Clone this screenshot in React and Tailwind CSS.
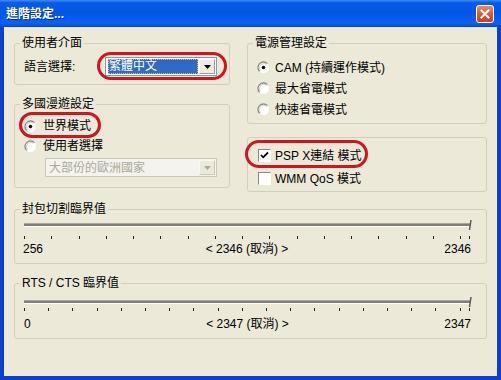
import React from "react";

function Radio({ checked }) {
  return (
    <svg width="13" height="13" viewBox="0 0 13 13" className="shrink-0 block">
      <circle cx="6.5" cy="6.5" r="5.5" fill="#ffffff" />
      <path d="M2.6 10.4 A5.5 5.5 0 0 1 10.4 2.6" stroke="#8a8a85" strokeWidth="1.3" fill="none" />
      <path d="M3.4 9.6 A4.4 4.4 0 0 1 9.6 3.4" stroke="#d4d0c8" strokeWidth="1" fill="none" />
      {checked && <circle cx="6.5" cy="6.5" r="1.8" fill="#111" />}
    </svg>
  );
}

function Check({ checked }) {
  return (
    <div className="w-[13px] h-[13px] shrink-0 bg-white border-t border-l border-t-[#8a8a85] border-l-[#8a8a85] border-b border-r border-b-white border-r-white relative">
      {checked && (
        <svg width="11" height="11" viewBox="0 0 11 11" className="absolute left-[0px] top-[0px]">
          <path d="M2 5 L4.2 7.3 L9 2.5" stroke="#000" strokeWidth="1.8" fill="none" />
        </svg>
      )}
    </div>
  );
}

function Arrow({ color }) {
  return (
    <svg width="7" height="4" viewBox="0 0 7 4" className="block">
      <path d="M0 0 H7 L3.5 4 Z" fill={color} />
    </svg>
  );
}

function Combo({ text, disabled, width }) {
  return (
    <div
      className={
        "h-[19px] flex items-center border p-[1px] " +
        (disabled ? "border-[#c9c7ba] bg-[#f4f3ee]" : "border-[#7f9db9] bg-white")
      }
      style={{ width }}
    >
      <div className="flex-1 h-full flex items-center pl-[1px]">
        {disabled ? (
          <span className="text-[#aca899] leading-[14px] pl-[1px]">{text}</span>
        ) : (
          <span className="h-full w-full bg-[#316ac5] text-white leading-[15px] pl-[1px] outline-1 outline-dotted outline-[#cfc28a] -outline-offset-1">
            {text}
          </span>
        )}
      </div>
      <div
        className={
          "w-[16px] h-full ml-[1px] flex items-center justify-center border-t border-l border-b border-r " +
          (disabled
            ? "bg-[#ece9d8] border-t-[#f7f7f3] border-l-[#f7f7f3] border-b-[#c9c7ba] border-r-[#c9c7ba]"
            : "bg-[#ecebe6] border-t-white border-l-white border-b-[#9d9c97] border-r-[#9d9c97]")
        }
      >
        <Arrow color={disabled ? "#aca899" : "#000"} />
      </div>
    </div>
  );
}

function Slider({ ticks, height, trackY, tickY }) {
  return (
    <svg width="471" height={height} className="block">
      <rect x="9" y={trackY - 1} width="446" height="1" fill="#a9a79a" />
      <rect x="9" y={trackY} width="446" height="2" fill="#807f77" />
      <rect x="9" y={trackY + 2} width="446" height="1" fill="#ffffff" />
      {ticks.map((x, i) => (
        <rect key={i} x={Math.round(x)} y={tickY} width="1" height="3" fill="#222" />
      ))}
      <line x1="456" y1={trackY - 4} x2="454.5" y2={trackY + 6} stroke="#55554f" strokeWidth="1.4" />
    </svg>
  );
}

function makeTicks(step, count) {
  const arr = [];
  for (let k = 0; k < count; k++) arr.push(9 + k * step);
  arr.push(454);
  return arr;
}

const legendCls = "ml-[5px] px-[2px] leading-[14px]";
const fsCls = "border border-[#d0d0bf] rounded-[3px] p-0 m-0 min-w-0";

export default function App() {
  return (
    <div className="relative w-[501px] h-[380px] flex flex-col bg-[#0a3fd0] overflow-hidden text-[12px] text-black font-['Liberation_Sans','Noto_Sans_CJK_TC',sans-serif]">
      {/* title bar */}
      <div className="h-[27px] shrink-0 flex items-center pl-[6px] pr-[7px] bg-[linear-gradient(180deg,#3f8cf3_0%,#0a5ce6_10%,#0055e5_45%,#0a62f2_85%,#0048d6_100%)]">
        <span className="text-white font-bold text-[12px] leading-[14px] [text-shadow:1px_1px_0_#0a2b8a]">
          進階設定...
        </span>
        <div className="ml-auto w-[18px] h-[18px] rounded-[3px] border border-white bg-[linear-gradient(180deg,#e98a6a_0%,#dc5a34_50%,#c8401b_100%)] flex items-center justify-center">
          <svg width="10" height="10" viewBox="0 0 10 10" className="block">
            <path d="M1.5 1.5 L8.5 8.5 M8.5 1.5 L1.5 8.5" stroke="#fff" strokeWidth="2" strokeLinecap="square" />
          </svg>
        </div>
      </div>

      {/* body */}
      <div className="flex-1 mx-[4px] mb-[4px] bg-[#ece9d8] pl-[10px] pt-[9px] flex flex-col">
        <div className="flex gap-[17px] items-start">
          {/* left col */}
          <div className="w-[216px] flex flex-col">
            <fieldset className={fsCls + " h-[49px]"}>
              <legend className={legendCls}>使用者介面</legend>
              <div className="pt-[7px] pl-[9px] flex items-center">
                <span className="w-[81px] leading-[14px]">語言選擇:</span>
                <Combo text="繁體中文" width={112} />
              </div>
            </fieldset>
            <fieldset className={fsCls + " h-[91px] mt-[12px]"}>
              <legend className={legendCls}>多國漫遊設定</legend>
              <div className="pt-[5px] pl-[9px] flex flex-col">
                <div className="h-[20px] flex items-center gap-[6px]">
                  <Radio checked />
                  <span className="leading-[14px]">世界模式</span>
                </div>
                <div className="h-[20px] flex items-center gap-[6px]">
                  <Radio />
                  <span className="leading-[14px]">使用者選擇</span>
                </div>
                <div className="mt-[2px] ml-[21px]">
                  <Combo text="大部份的歐洲國家" width={172} disabled />
                </div>
              </div>
            </fieldset>
          </div>

          {/* right col */}
          <div className="w-[240px] flex flex-col">
            <fieldset className={fsCls + " h-[88px]"}>
              <legend className={legendCls}>電源管理設定</legend>
              <div className="pt-[7px] pl-[9px] flex flex-col">
                <div className="h-[21px] flex items-center gap-[5px]">
                  <Radio checked />
                  <span className="leading-[14px]">CAM (持續運作模式)</span>
                </div>
                <div className="h-[21px] flex items-center gap-[5px]">
                  <Radio />
                  <span className="leading-[14px]">最大省電模式</span>
                </div>
                <div className="h-[21px] flex items-center gap-[5px]">
                  <Radio />
                  <span className="leading-[14px]">快速省電模式</span>
                </div>
              </div>
            </fieldset>
            <div className="mt-[13px] h-[55px] border border-[#d0d0bf] rounded-[3px] pt-[6px] pl-[10px] flex flex-col">
              <div className="h-[23px] flex items-center gap-[4px]">
                <Check checked />
                <span className="leading-[14px]">PSP X連結 模式</span>
              </div>
              <div className="h-[23px] flex items-center gap-[4px]">
                <Check />
                <span className="leading-[14px]">WMM QoS 模式</span>
              </div>
            </div>
          </div>
        </div>

        <fieldset className={fsCls + " w-[473px] h-[62px] mt-[10px]"}>
          <legend className={legendCls}>封包切割臨界值</legend>
          <Slider ticks={makeTicks(27.25, 17)} height={26} trackY={8} tickY={20} />
          <div className="grid grid-cols-[1fr_auto_1fr] pl-[8px] pr-[15px] leading-[14px]">
            <span>256</span>
            <span>&lt; 2346 (取消) &gt;</span>
            <span className="text-right">2346</span>
          </div>
        </fieldset>

        <fieldset className={fsCls + " w-[473px] h-[63px] mt-[12px]"}>
          <legend className={legendCls}>RTS / CTS 臨界值</legend>
          <Slider ticks={makeTicks(24.2, 19)} height={27} trackY={11} tickY={18} />
          <div className="grid grid-cols-[1fr_auto_1fr] pl-[9px] pr-[15px] leading-[14px]">
            <span>0</span>
            <span>&lt; 2347 (取消) &gt;</span>
            <span className="text-right">2347</span>
          </div>
        </fieldset>
      </div>

      {/* red annotation ellipses */}
      <div className="absolute left-[97px] top-[52px] w-[130px] h-[28px] rounded-full border-[3px] border-[#d2141c] pointer-events-none" />
      <div className="absolute left-[19px] top-[112px] w-[82px] h-[26px] rounded-full border-[3px] border-[#d2141c] pointer-events-none" />
      <div className="absolute left-[245px] top-[140px] w-[123px] h-[28px] rounded-full border-[3px] border-[#d2141c] pointer-events-none" />
    </div>
  );
}
